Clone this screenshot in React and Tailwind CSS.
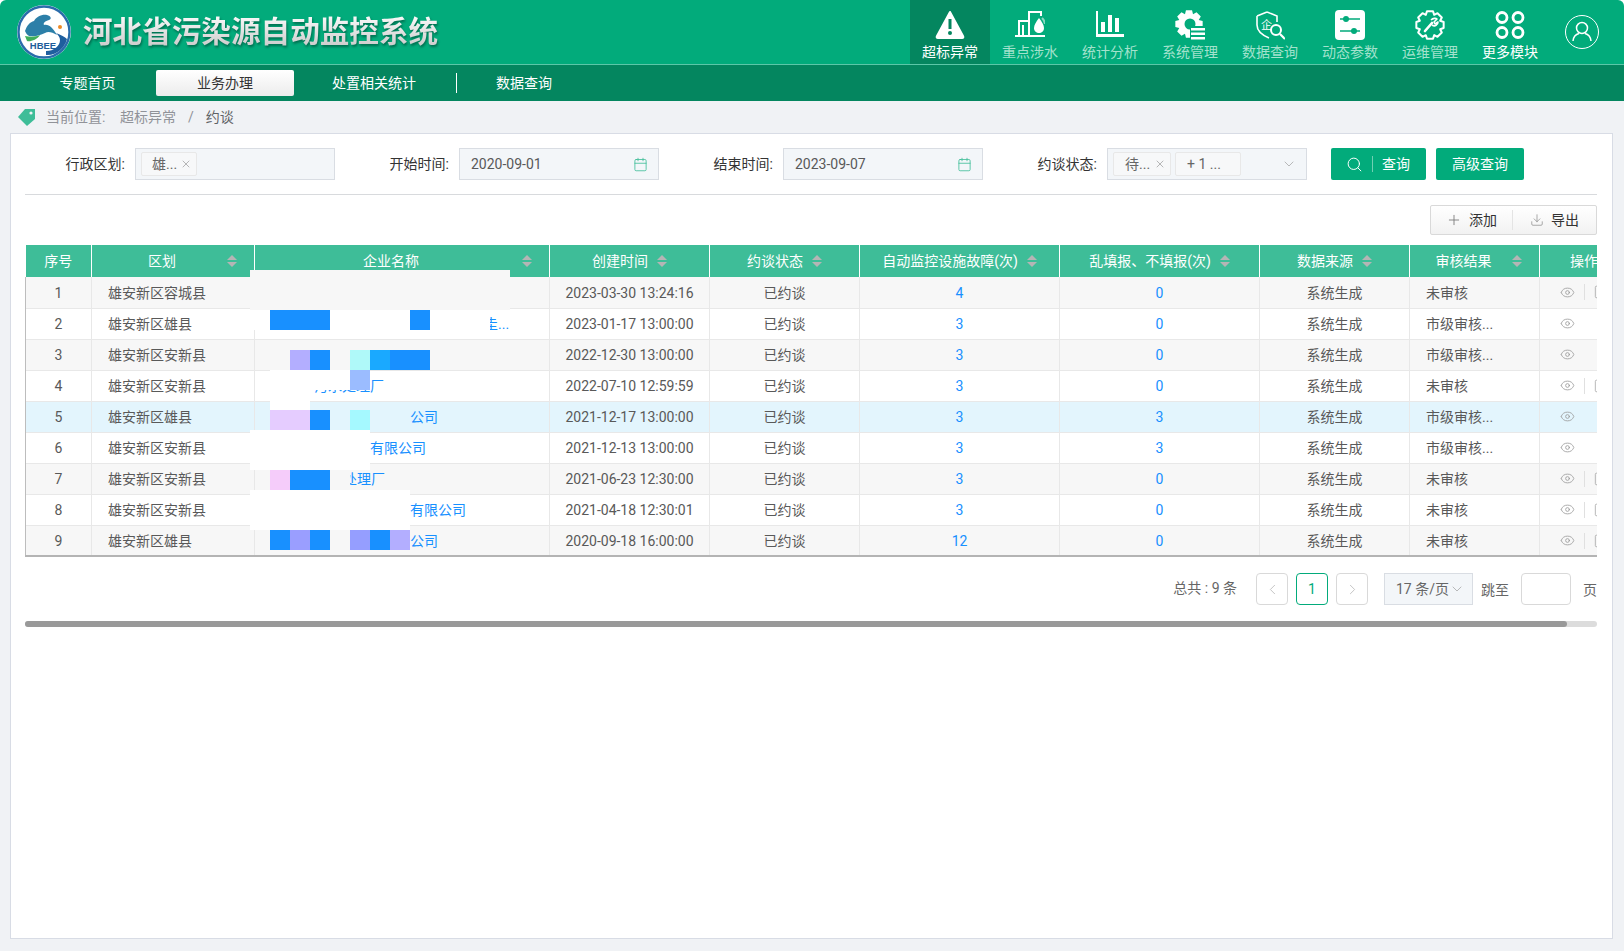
import React from 'react';
import { Calendar, ChevronDown, ChevronLeft, ChevronRight, Download, Eye, FileText, Plus, Search, X } from 'lucide-react';

const gearPoints = (cx, cy, outer, inner, teeth) => {
    const pts = [];
    for (let i = 0; i < teeth; i++) {
        const step = (Math.PI * 2) / teeth;
        const a = i * step - Math.PI / 2;
        [[inner, -0.5], [outer, -0.28], [outer, 0.28], [inner, 0.5]].forEach(([r, k]) => {
            const t = a + k * step;
            pts.push(`${(cx + r * Math.cos(t)).toFixed(2)},${(cy + r * Math.sin(t)).toFixed(2)}`);
        });
    }
    return pts.join(' ');
};

const AlertIcon = () => (
    <svg viewBox="0 0 30 30" className="w-[30px] h-[30px]">
        <path d="M15 2 L28 26 Q29 28 27 28 H3 Q1 28 2 26 Z" fill="#fff" stroke="#fff" strokeWidth="2" strokeLinejoin="round" />
        <rect x="13.5" y="9" width="3" height="10" fill="#04865f" />
        <circle cx="15" cy="23" r="2" fill="#04865f" />
    </svg>
);

const WaterIcon = () => (
    <svg viewBox="0 0 30 30" className="w-[30px] h-[30px]" fill="none" stroke="#fff" strokeWidth="2">
        <path d="M0 26 H30 M4 26 V11 H14 M14 26 V2 H26 V6 M8 26 V15" />
        <path d="M24 8 C21 12 19 15 19 18 C19 21.5 21.5 23 24 23 C26.5 23 29 21.5 29 18 C29 15 27 12 24 8 Z" fill="#fff" stroke="none" />
        <path d="M27 8 C29 10 30 12 30 14" stroke="#ffffff88" strokeWidth="2" />
    </svg>
);

const ChartIcon = () => (
    <svg viewBox="0 0 30 30" className="w-[30px] h-[30px]" fill="#fff">
        <path d="M1 1 H3 V24 H29 V27 H1 Z" />
        <rect x="6" y="12" width="4" height="10" />
        <rect x="13" y="5" width="4" height="17" />
        <rect x="20" y="8" width="4" height="14" />
    </svg>
);

const SystemIcon = () => (
    <svg viewBox="0 0 30 30" className="w-[30px] h-[30px]">
        <polygon points={gearPoints(14, 14, 14, 10.5, 8)} fill="#fff" />
        <circle cx="15" cy="14" r="5.5" fill="#02ab7b" />
        <rect x="15" y="16" width="15" height="14" fill="#02ab7b" />
        <rect x="16" y="18" width="14" height="2.5" fill="#fff" />
        <rect x="16" y="22.5" width="14" height="2.5" fill="#fff" />
        <rect x="16" y="27" width="14" height="2.5" fill="#fff" />
    </svg>
);

const QueryIcon = () => (
    <svg viewBox="0 0 30 30" className="w-[30px] h-[30px]" fill="none" stroke="#fff" strokeWidth="1.6">
        <path d="M12 2 L22 6 V12 M2 6 L12 2 M2 6 V15 C2 21 7 25 14 28" />
        <text x="6" y="19" fontSize="11" fill="#fff" stroke="none" fontFamily="'Noto Sans CJK SC', sans-serif">企</text>
        <circle cx="21" cy="20" r="5" strokeWidth="2" />
        <path d="M25 24 L30 29" strokeWidth="2.2" />
    </svg>
);

const ParamIcon = () => (
    <svg viewBox="0 0 30 30" className="w-[30px] h-[30px]">
        <rect width="30" height="30" rx="4" fill="#fff" />
        <path d="M5 9 H25 M5 21 H25" stroke="#02ab7b" strokeWidth="1.6" />
        <circle cx="11" cy="9" r="3" fill="#02ab7b" />
        <circle cx="19" cy="21" r="3" fill="#02ab7b" />
    </svg>
);

const OpsIcon = () => (
    <svg viewBox="0 0 30 30" className="w-[30px] h-[30px]" fill="none" stroke="#fff" strokeWidth="2" strokeLinejoin="round">
        <polygon points={gearPoints(15, 15, 14, 11, 8)} />
        <path d="M10 21 L17 13" strokeWidth="2.6" strokeLinecap="round" />
        <path d="M16 10 C18 8 21 8 22 9 L19 12 L20 14 L23 12 C23 15 20 17 17 15" strokeWidth="1.6" />
    </svg>
);

const MoreIcon = () => (
    <svg viewBox="0 0 30 30" className="w-[30px] h-[30px]" fill="none" stroke="#fff" strokeWidth="2.8">
        <circle cx="7" cy="7.5" r="5" />
        <circle cx="23" cy="7.5" r="5" />
        <circle cx="7" cy="22.5" r="5" />
        <circle cx="23" cy="22.5" r="5" />
    </svg>
);

const Logo = () => (
    <svg viewBox="0 0 56 56" className="w-[56px] h-[56px] shrink-0">
        <circle cx="28" cy="28" r="27" fill="#fff" />
        <circle cx="28" cy="28" r="25.5" fill="none" stroke="#2a6cab" strokeWidth="2.4" />
        <path d="M9 27 C11 21 14 18 18 17 C20 13 26 10 31 11 C35 12 36 15 33 16 C29 17 27 19 28 21 C33 20 37 24 41 31 C36 28 32 27 29 29 C24 31 20 33 13 32 C11 31 10 29 9 27 Z" fill="#2c7fa8" />
        <path d="M9 32 C14 33 20 33 24 31 C21 36 14 38 11 37 Z" fill="#3fae5a" />
        <path d="M30 47 C38 47 44 42 44 36 C44 33 42 31 40 29 C45 31 49 33 51 35 C49 44 40 52 30 51 Z" fill="#1f5f9e" />
        <circle cx="44" cy="23" r="2" fill="#ee8a24" />
        <text x="27" y="44.5" textAnchor="middle" fontSize="9.5" fontWeight="700" fill="#1d5c9a" fontFamily="'Liberation Sans', sans-serif">HBEE</text>
    </svg>
);

const navItems = [
    { name: '超标异常', icon: AlertIcon, active: true },
    { name: '重点涉水', icon: WaterIcon },
    { name: '统计分析', icon: ChartIcon },
    { name: '系统管理', icon: SystemIcon },
    { name: '数据查询', icon: QueryIcon },
    { name: '动态参数', icon: ParamIcon },
    { name: '运维管理', icon: OpsIcon },
    { name: '更多模块', icon: MoreIcon, white: true },
];

const columns = [
    { title: '序号', width: 'w-[66px]' },
    { title: '区划', width: 'w-[163px]', far: true },
    { title: '企业名称', width: 'w-[295px]', far: true },
    { title: '创建时间', width: 'w-[160px]', sort: true },
    { title: '约谈状态', width: 'w-[150px]', sort: true },
    { title: '自动监控设施故障(次)', width: 'w-[200px]', sort: true },
    { title: '乱填报、不填报(次)', width: 'w-[200px]', sort: true },
    { title: '数据来源', width: 'w-[150px]', sort: true },
    { title: '审核结果', width: 'w-[130px]', far: true },
    { title: '操作', width: 'w-[120px]', clip: true },
];

const rows = [
    { area: '雄安新区容城县', name: '', pad: '', time: '2023-03-30 13:24:16', a: 4, b: 0, result: '未审核', doc: true },
    { area: '雄安新区雄县', name: '圭...', pad: 'pl-[229px]', time: '2023-01-17 13:00:00', a: 3, b: 0, result: '市级审核...' },
    { area: '雄安新区安新县', name: '', pad: '', time: '2022-12-30 13:00:00', a: 3, b: 0, result: '市级审核...' },
    { area: '雄安新区安新县', name: '污水处理厂', pad: 'pl-[59px]', time: '2022-07-10 12:59:59', a: 3, b: 0, result: '未审核', doc: true },
    { area: '雄安新区雄县', name: '公司', pad: 'pl-[155px]', time: '2021-12-17 13:00:00', a: 3, b: 3, result: '市级审核...', hot: true },
    { area: '雄安新区安新县', name: '有限公司', pad: 'pl-[115px]', time: '2021-12-13 13:00:00', a: 3, b: 3, result: '市级审核...' },
    { area: '雄安新区安新县', name: '处理厂', pad: 'pl-[88px]', time: '2021-06-23 12:30:00', a: 3, b: 0, result: '未审核', doc: true },
    { area: '雄安新区安新县', name: '有限公司', pad: 'pl-[155px]', time: '2021-04-18 12:30:01', a: 3, b: 0, result: '未审核', doc: true },
    { area: '雄安新区雄县', name: '公司', pad: 'pl-[155px]', time: '2020-09-18 16:00:00', a: 12, b: 0, result: '未审核', doc: true },
];

// blocks painted over the company names in the reference
const masks = [
    'left-[225px] top-[25px] w-[260px] h-[40px] bg-[#f7f7f7]',
    'left-[225px] top-[65px] w-[240px] h-[20px] bg-white',
    'left-[245px] top-[65px] w-[60px] h-[20px] bg-[#1890ff]',
    'left-[385px] top-[65px] w-[20px] h-[20px] bg-[#1890ff]',
    'left-[265px] top-[105px] w-[20px] h-[20px] bg-[#b3aeff]',
    'left-[285px] top-[105px] w-[20px] h-[20px] bg-[#1890ff]',
    'left-[325px] top-[105px] w-[20px] h-[20px] bg-[#aff9f9]',
    'left-[345px] top-[105px] w-[20px] h-[20px] bg-[#1aa9ff]',
    'left-[365px] top-[105px] w-[40px] h-[20px] bg-[#1890ff]',
    'left-[245px] top-[125px] w-[80px] h-[20px] bg-white',
    'left-[325px] top-[125px] w-[20px] h-[20px] bg-[#9bbcff]',
    'left-[245px] top-[145px] w-[40px] h-[20px] bg-white',
    'left-[245px] top-[165px] w-[40px] h-[20px] bg-[#e5ccff]',
    'left-[285px] top-[165px] w-[20px] h-[20px] bg-[#1890ff]',
    'left-[325px] top-[165px] w-[20px] h-[20px] bg-[#a5f9ff]',
    'left-[225px] top-[185px] w-[120px] h-[40px] bg-white',
    'left-[245px] top-[225px] w-[20px] h-[20px] bg-[#f5ccfa]',
    'left-[265px] top-[225px] w-[40px] h-[20px] bg-[#1890ff]',
    'left-[305px] top-[225px] w-[20px] h-[20px] bg-[#f7f7f7]',
    'left-[225px] top-[245px] w-[160px] h-[40px] bg-white',
    'left-[245px] top-[285px] w-[20px] h-[20px] bg-[#1890ff]',
    'left-[265px] top-[285px] w-[20px] h-[20px] bg-[#9a9eff]',
    'left-[285px] top-[285px] w-[20px] h-[20px] bg-[#1890ff]',
    'left-[325px] top-[285px] w-[20px] h-[20px] bg-[#959eff]',
    'left-[345px] top-[285px] w-[20px] h-[20px] bg-[#1890ff]',
    'left-[365px] top-[285px] w-[20px] h-[20px] bg-[#b3aeff]',
];

const Caret = () => (
    <span className="flex flex-col gap-[2px] shrink-0">
        <span className="w-0 h-0 border-x-[5px] border-x-transparent border-b-[5px] border-b-[#b5b5b5]" />
        <span className="w-0 h-0 border-x-[5px] border-x-transparent border-t-[5px] border-t-[#b5b5b5]" />
    </span>
);

const Tag = ({ text, close, className }) => (
    <span className={`h-[24px] flex items-center bg-[#f7f8f9] border border-[#e8e8e8] rounded-[2px] text-[#666] ${className}`}>
        {text}
        {close && <X size={12} strokeWidth={1.2} className="ml-auto text-[#888]" />}
    </span>
);

const Field = ({ label, labelWidth, children }) => (
    <>
        <span className={`${labelWidth} text-right pr-[10px] text-[#333] shrink-0`}>{label}</span>
        <div className="w-[200px] h-[32px] bg-[#f3f6f9] border border-[#d9dde3] flex items-center px-[5px] shrink-0">
            {children}
        </div>
    </>
);

const DateField = ({ label, value }) => (
    <Field label={label} labelWidth="w-[124px]">
        <span className="pl-[6px] flex-1 text-[#595959]">{value}</span>
        <Calendar size={15} strokeWidth={1.3} className="text-[#3ebd98] mr-[5px]" />
    </Field>
);

export default function App() {
    return (
        <div className="w-full h-[951px] overflow-hidden bg-white flex flex-col text-[14px] font-['Roboto','Noto_Sans_CJK_SC',sans-serif]">
            <header className="h-[65px] shrink-0 bg-[#02ab7b] border-b border-[#5cc7a8] rounded-t-[6px] flex pl-[16px]">
                <div className="flex items-center">
                    <Logo />
                    <h1 className="ml-[11px] text-[29.6px] leading-[40px] font-bold text-transparent bg-gradient-to-b from-white to-[#c4c4c4] bg-clip-text drop-shadow-[1px_2px_1px_rgba(0,0,0,0.35)]">
                        河北省污染源自动监控系统
                    </h1>
                </div>
                <nav className="ml-auto flex">
                    {navItems.map(item => (
                        <div
                            key={item.name}
                            className={`w-[80px] h-[64px] flex flex-col items-center pt-[10px] ${item.active ? 'bg-[#04865f]' : ''}`}
                        >
                            <item.icon />
                            <span className={`mt-[2px] leading-[20px] whitespace-nowrap ${item.active || item.white ? 'text-white' : 'text-[#a3e2cd]'}`}>
                                {item.name}
                            </span>
                        </div>
                    ))}
                </nav>
                <div className="w-[74px] flex items-center justify-center pr-[10px]">
                    <svg viewBox="0 0 34 34" className="w-[34px] h-[34px]" fill="none" stroke="#fff" strokeWidth="1">
                        <circle cx="17" cy="17" r="16.5" />
                        <circle cx="17" cy="13" r="5.5" strokeWidth="1.5" />
                        <path d="M8 26 C8.5 21 12 19 14 18.5 M26 26 C25.5 21 22 19 20 18.5" strokeWidth="1.5" />
                    </svg>
                </div>
            </header>

            <div className="h-[36px] shrink-0 bg-[#04865f] flex items-center pl-[19px] text-white">
                <a className="w-[137px] text-center">专题首页</a>
                <a className="w-[138px] h-[26px] leading-[26px] text-center rounded-[2px] text-[#333] bg-gradient-to-b from-white to-[#ececec]">业务办理</a>
                <a className="w-[160px] text-center">处置相关统计</a>
                <span className="ml-[2px] w-px h-[20px] bg-white" />
                <a className="w-[134px] text-center">数据查询</a>
            </div>

            <div className="flex-1 min-h-0 bg-[#f0f2f5] flex flex-col pb-[12px]">
                <div className="h-[32px] shrink-0 flex items-center pl-[17px] text-[#909399]">
                    <svg viewBox="0 0 20 20" className="w-[20px] h-[20px]">
                        <path d="M8 2 H18 V12 L10 19 L1 10 Z" fill="#3ebd98" />
                        <circle cx="14" cy="6" r="1.6" fill="#f0f2f5" />
                    </svg>
                    <span className="ml-[9px] w-[74px]">当前位置:</span>
                    <span>超标异常</span>
                    <span className="mx-[12px]">/</span>
                    <span className="text-[#606266]">约谈</span>
                </div>

                <main className="flex-1 min-h-0 ml-[10px] mr-[11px] bg-white border border-[#d8dce5] pl-[14px] pr-[15px] pt-[14px]">
                    <div className="h-[32px] flex items-center">
                        <Field label="行政区划:" labelWidth="w-[110px]">
                            <Tag text="雄..." close className="w-[56px] pl-[10px] pr-[4px]" />
                        </Field>
                        <DateField label="开始时间:" value="2020-09-01" />
                        <DateField label="结束时间:" value="2023-09-07" />
                        <Field label="约谈状态:" labelWidth="w-[124px]">
                            <Tag text="待..." close className="w-[58px] pl-[11px] pr-[4px] mr-[4px]" />
                            <Tag text="+ 1 ..." className="w-[66px] pl-[11px]" />
                            <ChevronDown size={16} strokeWidth={1} className="ml-auto mr-[4px] text-[#999]" />
                        </Field>
                        <button className="ml-[24px] w-[95px] h-[32px] rounded-[2px] bg-[#02ab7b] text-white flex items-center pl-[15px]">
                            <Search size={17} strokeWidth={1.4} />
                            <span className="w-px h-[16px] bg-[#6fd0b3] mx-[9px]" />
                            <span>查询</span>
                        </button>
                        <button className="ml-[10px] w-[88px] h-[32px] rounded-[2px] bg-[#02ab7b] text-white">高级查询</button>
                    </div>
                    <div className="mt-[14px] h-px bg-[#d8dadd]" />

                    <div className="mt-[10px] flex justify-end">
                        <div className="w-[167px] h-[30px] flex items-center border border-[#d9d9d9] rounded-[2px] bg-gradient-to-b from-white to-[#f2f2f2] text-[#333]">
                            <Plus size={16} strokeWidth={1.3} className="ml-[15px] text-[#777]" />
                            <span className="ml-[7px]">添加</span>
                            <span className="ml-[15px] w-px h-[20px] bg-[#e4e4e4]" />
                            <Download size={14} strokeWidth={1.2} className="ml-[17px] text-[#888]" />
                            <span className="ml-[7px]">导出</span>
                        </div>
                    </div>

                    <div className="relative mt-[10px] w-[1572px] h-[312px] overflow-hidden border-b-2 border-[#b4b4b4] text-[#595959]">
                        <table className="table-fixed w-[1634px] border-collapse">
                            <colgroup>
                                {columns.map(c => <col key={c.title} className={c.width} />)}
                            </colgroup>
                            <thead>
                                <tr className="h-[32px] bg-[#3ebd98] text-white">
                                    {columns.map(c => (
                                        <th key={c.title} className={`p-0 font-normal border-r border-white ${c.clip ? 'text-left pl-[30px]' : ''}`}>
                                            {c.far ? (
                                                <div className="flex items-center pl-[5px] pr-[17px]">
                                                    <span className="flex-1 text-center whitespace-nowrap">{c.title}</span>
                                                    <Caret />
                                                </div>
                                            ) : c.sort ? (
                                                <div className="flex items-center justify-center gap-[9px]">
                                                    <span className="whitespace-nowrap">{c.title}</span>
                                                    <Caret />
                                                </div>
                                            ) : c.title}
                                        </th>
                                    ))}
                                </tr>
                            </thead>
                            <tbody>
                                {rows.map((r, i) => (
                                    <tr
                                        key={r.time}
                                        className={`h-[31px] border-b border-[#e8e8e8] [&>td]:pt-[2px] ${r.hot ? 'bg-[#e3f5fd]' : i % 2 === 0 ? 'bg-[#f7f7f7]' : 'bg-white'}`}
                                    >
                                        <td className="px-0 pb-0 text-center border-l border-[#bdbdbd]">{i + 1}</td>
                                        <td className="pr-0 pb-0 pl-[16px] border-l border-[#e8e8e8]">{r.area}</td>
                                        <td className={`pr-0 pb-0 ${r.pad} border-l border-[#e8e8e8] text-[#1890ff] whitespace-nowrap`}>{r.name}</td>
                                        <td className="px-0 pb-0 text-center border-l border-[#e8e8e8]">{r.time}</td>
                                        <td className="px-0 pb-0 text-center border-l border-[#e8e8e8]">已约谈</td>
                                        <td className="px-0 pb-0 text-center border-l border-[#e8e8e8] text-[#1890ff]">{r.a}</td>
                                        <td className="px-0 pb-0 text-center border-l border-[#e8e8e8] text-[#1890ff]">{r.b}</td>
                                        <td className="px-0 pb-0 text-center border-l border-[#e8e8e8]">系统生成</td>
                                        <td className="pr-0 pb-0 pl-[16px] border-l border-[#e8e8e8]">{r.result}</td>
                                        <td className="px-0 pb-0 border-l border-[#e8e8e8]">
                                            <div className="flex items-center pl-[20px] pb-[2px] text-[#999]">
                                                <Eye size={15} strokeWidth={1.3} />
                                                {r.doc && <span className="ml-[9px] w-px h-[16px] bg-[#e0e0e0]" />}
                                                {r.doc && <FileText size={14} strokeWidth={1.2} className="ml-[8px]" />}
                                            </div>
                                        </td>
                                    </tr>
                                ))}
                            </tbody>
                        </table>
                        {masks.map(m => <div key={m} className={`absolute ${m}`} />)}
                    </div>

                    <div className="mt-[16px] h-[32px] flex items-center text-[#666]">
                        <span className="ml-auto pb-[1px] mr-[1px]">总共 : 9 条</span>
                        <span className="ml-[18px] w-[32px] h-[32px] flex items-center justify-center border border-[#d9d9d9] rounded-[4px] text-[#bbb]">
                            <ChevronLeft size={17} strokeWidth={1.2} />
                        </span>
                        <span className="ml-[8px] w-[32px] h-[32px] flex items-center justify-center border border-[#02ab7b] rounded-[4px] text-[#02ab7b]">1</span>
                        <span className="ml-[8px] w-[32px] h-[32px] flex items-center justify-center border border-[#d9d9d9] rounded-[4px] text-[#bbb]">
                            <ChevronRight size={17} strokeWidth={1.2} />
                        </span>
                        <span className="ml-[16px] w-[89px] h-[32px] flex items-center pl-[11px] bg-[#f3f6f9] border border-[#d9dde3] whitespace-nowrap">
                            17 条/页
                            <ChevronDown size={16} strokeWidth={1} className="text-[#999]" />
                        </span>
                        <span className="ml-[8px] pt-[2px]">跳至</span>
                        <span className="ml-[12px] w-[50px] h-[32px] border border-[#d9d9d9] rounded-[4px]" />
                        <span className="ml-[12px] pt-[2px]">页</span>
                    </div>

                    <div className="mt-[16px] h-[6px] rounded-[3px] bg-[#dcdcdc]">
                        <div className="w-[1542px] h-full rounded-[3px] bg-[#999]" />
                    </div>
                </main>
            </div>
        </div>
    );
}
